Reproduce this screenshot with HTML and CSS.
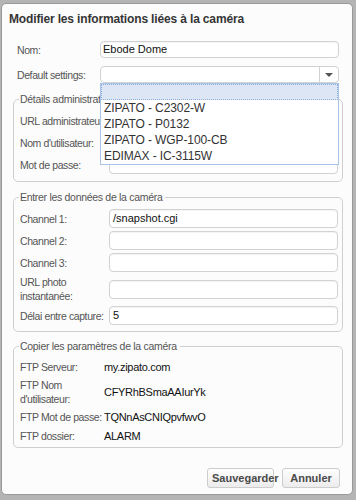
FILE: index.html
```html
<!DOCTYPE html>
<html lang="fr">
<head>
    <meta charset="UTF-8">
    <meta name="viewport" content="width=device-width, initial-scale=1.0">
    <title>Modifier les informations liées à la caméra</title>
    <link rel="stylesheet" href="styles.css">
</head>
<body>
    <div class="dialog">
        <h1 class="title">Modifier les informations liées à la caméra</h1>

        <!-- Basic info -->
        <div class="top">
            <div class="row">
                <label>Nom:</label>
                <div class="field">Ebode Dome</div>
            </div>
            <div class="row">
                <label>Default settings:</label>
                <div class="select">
                    <div class="select-value"></div>
                    <div class="select-arrow"><span></span></div>
                    <ul class="dropdown">
                        <li class="selected">&nbsp;</li>
                        <li>ZIPATO - C2302-W</li>
                        <li>ZIPATO - P0132</li>
                        <li>ZIPATO - WGP-100-CB</li>
                        <li>EDIMAX - IC-3115W</li>
                    </ul>
                </div>
            </div>
        </div>

        <fieldset class="group">
            <legend>Détails administrateur</legend>
            <div class="row">
                <label>URL administrateur:</label>
                <div class="field"></div>
            </div>
            <div class="row">
                <label>Nom d'utilisateur:</label>
                <div class="field"></div>
            </div>
            <div class="row">
                <label>Mot de passe:</label>
                <div class="field"></div>
            </div>
        </fieldset>

        <fieldset class="group">
            <legend>Entrer les données de la caméra</legend>
            <div class="row">
                <label>Channel 1:</label>
                <div class="field">/snapshot.cgi</div>
            </div>
            <div class="row">
                <label>Channel 2:</label>
                <div class="field"></div>
            </div>
            <div class="row">
                <label>Channel 3:</label>
                <div class="field"></div>
            </div>
            <div class="row">
                <label>URL photo<br>instantanée:</label>
                <div class="field"></div>
            </div>
            <div class="row">
                <label>Délai entre capture:</label>
                <div class="field">5</div>
            </div>
        </fieldset>

        <fieldset class="group ftp">
            <legend>Copier les paramètres de la caméra</legend>
            <div class="row">
                <label>FTP Serveur:</label>
                <span class="value">my.zipato.com</span>
            </div>
            <div class="row">
                <label>FTP Nom<br>d'utilisateur:</label>
                <span class="value">CFYRhBSmaAAIurYk</span>
            </div>
            <div class="row">
                <label>FTP Mot de passe:</label>
                <span class="value">TQNnAsCNIQpvfwvO</span>
            </div>
            <div class="row">
                <label>FTP dossier:</label>
                <span class="value">ALARM</span>
            </div>
        </fieldset>

        <div class="buttons">
            <button class="save">Sauvegarder</button>
            <button class="cancel">Annuler</button>
        </div>
    </div>
</body>
</html>
```

FILE: styles.css
```css
body {
    margin: 0;
    background-color: #b4b4b4;
    font-family: "Liberation Sans", Arial, sans-serif;
    font-size: 11px;
    color: #555;
}
.dialog {
    margin: 3px 3px 3px 1px;
    height: 492px;
    box-sizing: border-box;
    background-color: #fcfcfc;
    border: 1px solid #9a9a9a;
    border-radius: 5px;
}
.title {
    margin: 0;
    padding: 6px 7px 0;
    line-height: 18px;
    font-size: 12px;
    font-weight: bold;
    color: #353535;
    letter-spacing: -0.15px;
}
.top {
    margin-top: 13px;
    padding: 0 13px 0 15px;
    display: flex;
    flex-direction: column;
    gap: 8px;
}
.top .row {
    grid-template-columns: 83px 1fr;
    height: 17px;
}
.row {
    display: grid;
    grid-template-columns: 89px 1fr;
    align-items: center;
}
label {
    font-size: 10.5px;
    line-height: 14px;
    white-space: nowrap;
    letter-spacing: -0.4px;
}
.field {
    height: 19px;
    box-sizing: border-box;
    padding: 0 3px;
    line-height: 17px;
    background-color: #fff;
    border: 1px solid #d2d2d2;
    border-radius: 4px;
    box-shadow: inset 0 1px 1px rgba(0, 0, 0, 0.05);
    color: #111;
}
.top .field {
    height: 17px;
    line-height: 15px;
    padding: 0 2px;
}
.select {
    position: relative;
    height: 17px;
    display: flex;
    background-color: #fff;
    border: 1px solid #d2d2d2;
    border-radius: 4px;
    box-sizing: border-box;
}
.select-value {
    flex: 1;
}
.select-arrow {
    width: 18px;
    border-left: 1px solid #d2d2d2;
    display: flex;
    align-items: center;
    justify-content: center;
}
.select-arrow span {
    width: 0;
    height: 0;
    border-left: 4px solid transparent;
    border-right: 4px solid transparent;
    border-top: 4px solid #555;
}
.dropdown {
    position: absolute;
    top: 16px;
    left: -1px;
    right: -1px;
    z-index: 5;
    margin: 0;
    padding: 0;
    list-style: none;
    background-color: #fff;
    border: 1px solid #a9c3e6;
}
.dropdown li {
    height: 16px;
    line-height: 16px;
    padding-left: 3px;
    font-size: 12px;
    color: #333;
    letter-spacing: -0.1px;
}
.dropdown li.selected {
    background-color: #dce6f5;
    outline: 1px dotted #8eaedc;
    outline-offset: -1px;
}
.group {
    margin: 9px 9px 0 11px;
    padding: 5px 4px 6px 6px;
    border: 1px solid #cfcfcf;
    border-radius: 5px;
    display: flex;
    flex-direction: column;
    gap: 3px;
}
.group:first-of-type {
    margin-top: 10px;
    padding-bottom: 7px;
}
legend {
    padding: 0 3px 0 1px;
    margin-left: -1px;
    font-size: 10.5px;
    line-height: 13px;
    color: #555;
    letter-spacing: -0.3px;
}
.ftp {
    margin-top: 8px;
    padding-top: 6px;
    padding-bottom: 3px;
    gap: 3px;
}
.ftp .row {
    grid-template-columns: 84px 1fr;
    min-height: 16px;
}
.value {
    color: #111;
    letter-spacing: -0.3px;
}
.buttons {
    display: flex;
    justify-content: flex-end;
    gap: 8px;
    margin: 20px 12px 0 0;
}
button {
    height: 20px;
    padding: 0 4px;
    font-family: "Liberation Sans", Arial, sans-serif;
    font-size: 11px;
    font-weight: bold;
    color: #4a4a4a;
    background: linear-gradient(#fefefe, #ececec);
    border: 1px solid #cdcdcd;
    border-radius: 3px;
}
.save {
    width: 67px;
}
.cancel {
    width: 58px;
}
```
